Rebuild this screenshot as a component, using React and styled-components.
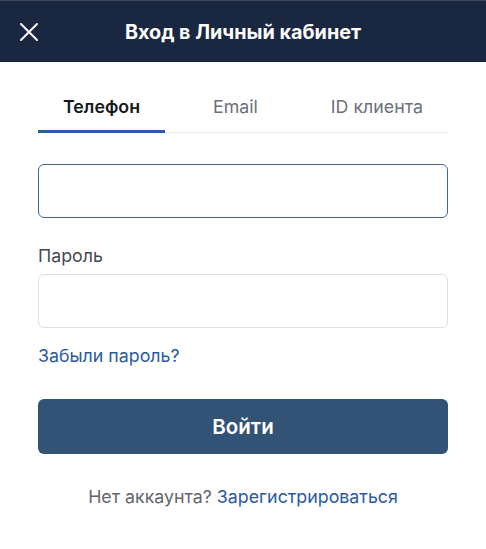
import React, { useState } from 'react'
import styled, { createGlobalStyle } from 'styled-components'

const Global = createGlobalStyle`
  body {
    margin: 0;
    background: #fff;
    font-family: Inter, "Noto Sans", sans-serif;
  }
`

const tabs = ['Телефон', 'Email', 'ID клиента']

function App() {
	const [active, setActive] = useState(0)
	return (
		<>
			<Global />
			<Header>
				<Close aria-label='close'>
					<svg width='20' height='20' viewBox='0 0 20 20'>
						<path d='M2 2L18 18M18 2L2 18' stroke='#fff' strokeWidth='2' strokeLinecap='round' />
					</svg>
				</Close>
				<Title>Вход в Личный кабинет</Title>
			</Header>
			<Body>
				<Tabs>
					{tabs.map((t, i) => (
						<Tab key={t} $active={i === active} onClick={() => setActive(i)}>{t}</Tab>
					))}
				</Tabs>
				<Input $focused />
				<Label>Пароль</Label>
				<Input type='password' />
				<Link $block>Забыли пароль?</Link>
				<Button>Войти</Button>
				<Footer>Нет аккаунта? <Link>Зарегистрироваться</Link></Footer>
			</Body>
		</>)
}

const Header = styled.header`
	position: relative;
	height: 62px;
	background: #1a2740;
	border-top: 1px solid #3b4658;
	box-sizing: border-box;
	display: flex;
	align-items: center;
	justify-content: center;
`

const Close = styled.button`
	position: absolute;
	left: 19px;
	top: 21px;
	padding: 0;
	border: 0;
	background: none;
	display: flex;
`

const Title = styled.h1`
	margin: 0;
	color: #fff;
	font-size: 19.8px;
	font-weight: 700;
`

const Body = styled.main`
	padding: 23px 38px 0 38px;
	display: flex;
	flex-direction: column;
`

const Tabs = styled.nav`
	display: flex;
	justify-content: space-between;
	border-bottom: 1px solid #e8eaed;
	margin-bottom: 31px;
`

const Tab = styled.div`
	padding: 11px 25px 12px;
	margin-bottom: -1px;
	font-size: 17.8px;
	line-height: 22px;
	font-weight: ${p => p.$active ? 600 : 400};
	color: ${p => p.$active ? '#16181d' : '#6b7079'};
	border-bottom: 3px solid ${p => p.$active ? '#2a5fa8' : 'transparent'};
	border-radius: 2px 2px 0 0;
	cursor: pointer;
`

const Input = styled.input`
	height: 54px;
	box-sizing: border-box;
	border: 1px solid ${p => p.$focused ? '#46648c' : '#dcdfe3'};
	border-radius: 6px;
	padding: 0 14px;
	font: inherit;
	outline: none;
`

const Label = styled.label`
	margin: 27px 0 7px;
	font-size: 17.8px;
	color: #45494f;
	line-height: 22px;
`

const Link = styled.a`
	display: ${p => p.$block ? 'block' : 'inline'};
	margin: ${p => p.$block ? '15px 0 0' : '0'};
	color: #2a5a9e;
	font-size: 17.8px;
	line-height: 26px;
	cursor: pointer;
`

const Button = styled.button`
	margin-top: 30px;
	height: 55px;
	border: 0;
	border-radius: 6px;
	background: #325276;
	color: #fff;
	font: inherit;
	font-size: 20.5px;
	font-weight: 600;
`

const Footer = styled.p`
	margin: 30px 0 0;
	text-align: center;
	font-size: 17.8px;
	line-height: 26px;
	color: #62666d;
`

export default App
